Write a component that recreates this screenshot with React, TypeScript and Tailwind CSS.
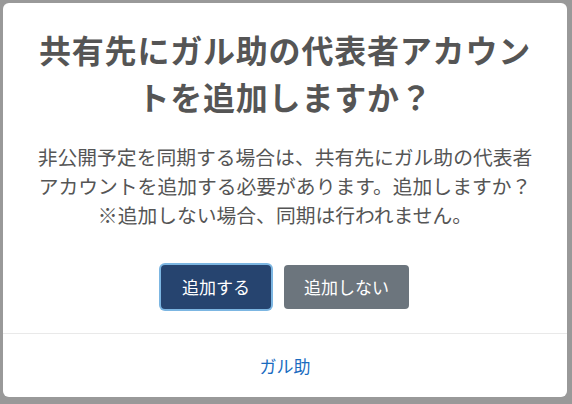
import React from "react";

const jp = {
  fontFamily: '"Noto Sans CJK JP", "Noto Sans", sans-serif',
};

export default function App() {
  return (
    <div
      className="w-[572px] h-[404px] bg-[#999999] p-[3px] overflow-hidden"
      style={jp}
    >
      <div className="w-[564px] h-[394px] bg-white rounded-[6px] flex flex-col">
        <div className="flex-1 flex flex-col items-center pt-[23px] px-[14px]">
          <h1 className="text-[32px] leading-[47px] font-bold text-[#555555] text-center tracking-[0.8px]">
            共有先にガル助の代表者アカウン
            <br />
            トを追加しますか？
          </h1>

          <p className="mt-[22px] text-[19.8px] leading-[29px] text-[#555555] text-center">
            非公開予定を同期する場合は、共有先にガル助の代表者
            <br />
            アカウントを追加する必要があります。追加しますか？
            <br />
            ※追加しない場合、同期は行われません。
          </p>

          <div className="mt-[36px] flex items-center gap-[13px]">
            <button className="h-[44px] px-[21px] rounded-[4px] bg-[#26446f] text-white text-[17px] ring-2 ring-[#7cb6e2]">
              追加する
            </button>
            <button className="h-[44px] px-[20px] rounded-[4px] bg-[#6c757d] text-white text-[17px]">
              追加しない
            </button>
          </div>
        </div>

        <div className="h-[64px] border-t border-[#e9e9e9] flex items-center justify-center">
          <a className="text-[17px] text-[#1a6bbf] cursor-pointer">ガル助</a>
        </div>
      </div>
    </div>
  );
}
